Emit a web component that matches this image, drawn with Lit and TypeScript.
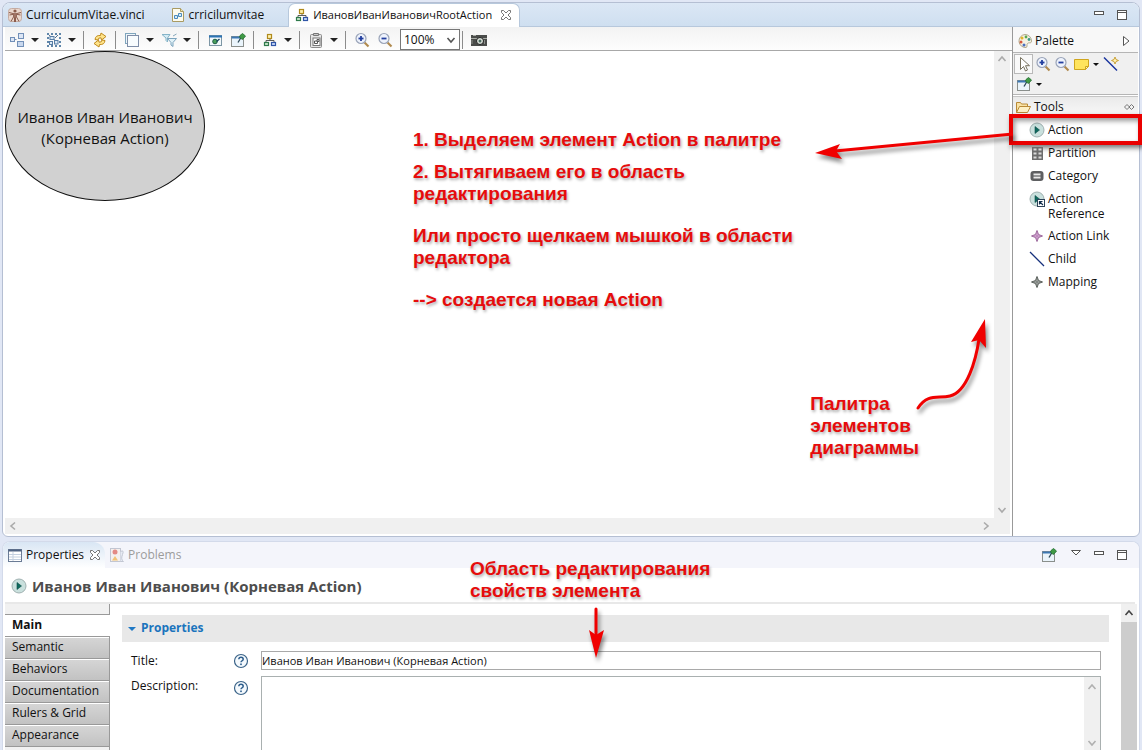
import { LitElement, html, css, svg, nothing, TemplateResult } from "lit";
import { customElement, property, state } from "lit/decorators.js";
import { classMap } from "lit/directives/class-map.js";

const playDisc = svg`
  <circle cx="8" cy="8" r="7" fill="#c9e0dd" stroke="#9fb0b0"/>
  <path d="M6 4.500v7L10.500 8z" fill="#0f6a5f" stroke="#0b4b47" stroke-width=".6"/>`;

const pinnedWindow = svg`
  <rect x="1.500" y="4.500" width="12" height="10" fill="#eaf4fb" stroke="#8a8f8c"/>
  <path d="M1.500 5.500h9" stroke="#3c78b4" stroke-width="2"/>
  <path d="M11 5.500 8 10.500" stroke="#2d4858" stroke-width="1.300"/>
  <path d="M10 3.500 12.500 1.500 15.500 4 13.500 6.500 12 7.500 9.500 5z" fill="#3f9a45" stroke="#1f6d2d" stroke-width=".8"/>`;

const magnifier = (plus: boolean) => svg`
  <path d="m10.500 10.500 4 4" stroke="#b08a4e" stroke-width="2.200"/>
  <circle cx="7" cy="6.500" r="5" fill="#eef3fd" stroke="#9aa4b8" stroke-width="1.200"/>
  <path d="M4.500 6.500h5" stroke="#233f9f" stroke-width="1.800"/>
  ${plus ? svg`<path d="M7 4v5" stroke="#233f9f" stroke-width="1.800"/>` : nothing}`;

const tree = svg`
  <path d="M8 6v3M4 11V8.500h8V11" fill="none" stroke="#5b5b5b"/>
  <rect x="5.500" y="2.500" width="4" height="4" fill="#fff2b0" stroke="#b08a1c" stroke-width="1.200"/>
  <rect x="2.500" y="10.500" width="4" height="3" fill="#cfe8cf" stroke="#2f7a4c" stroke-width="1.200"/>
  <rect x="9.500" y="10.500" width="4" height="3" fill="#cddcf8" stroke="#2f55a8" stroke-width="1.200"/>`;

const sparkle = (fill: string, stroke: string) => svg`
  <path d="M8 2.500 9.500 6.500 13.500 8 9.500 9.500 8 13.500 6.500 9.500 2.500 8 6.500 6.500z" fill="${fill}" stroke="${stroke}"/>
  <path d="M8 5v6M5 8h6" stroke="${stroke}" stroke-width=".6"/>`;

const ICONS: Record<string, unknown> = {
  vinci: svg`
    <rect x="1.500" y="1.500" width="13" height="13" rx="3" fill="#ead7cd" stroke="#c4aba1"/>
    <circle cx="8" cy="4" r="1.600" fill="#8a5b4c"/>
    <path d="M2 5.500 8 7l6-1.500M2.500 8 8 7l5.500 1M6.500 7v3L4 14.500M9.500 7v3l2.500 4.500M7.500 10v5M8.500 10v5" fill="none" stroke="#8a5b4c"/>
    <path d="M6.500 6h3v4.500h-3z" fill="#a07566"/>`,
  diagramFile: svg`
    <path d="M2.500 1.500h8l3 3v10h-11z" fill="#fdfbee" stroke="#a99a62"/>
    <path d="M10.500 1.500v3h3" fill="#efe2ad" stroke="#a99a62"/>
    <path d="M4.500 8.500h3v3h-3zM8.500 6.500h3v3h-3z" fill="#d8ecf8" stroke="#4b8bbd"/>`,
  tree,
  arrange: svg`
    <rect x="1.500" y="5.500" width="4" height="4" fill="#dce6f5" stroke="#7290b8"/>
    <rect x="9.500" y="1.500" width="5" height="5" fill="#dce6f5" stroke="#7290b8"/>
    <rect x="8.500" y="9.500" width="6" height="5" fill="#c9d8ee" stroke="#7290b8"/>
    <path d="M6 7.500h1.500" stroke="#7290b8"/>`,
  selectAll: svg`
    <path d="M1 1h2v2H1zM5 1h2v2H5zM9 1h2v2H9zM13 1h2v2h-2zM1 13h2v2H1zM5 13h2v2H5zM9 13h2v2H9zM13 13h2v2h-2zM1 5h2v2H1zM1 9h2v2H1zM13 5h2v2h-2zM13 9h2v2h-2z" fill="#5f86aa"/>
    <path d="m3 3 9 8M12 3l-3 3" stroke="#4f6f8f"/>
    <rect x="4" y="4.500" width="4" height="3" fill="#d9e8f6" stroke="#587ea6"/>
    <rect x="8.500" y="8.500" width="3.500" height="3.500" fill="#d9e8f6" stroke="#587ea6"/>
    <rect x="3.500" y="9.500" width="3" height="3" fill="#d9e8f6" stroke="#587ea6"/>`,
  refresh: svg`
    <path d="M3 7.500Q3.500 3 8.500 3.500L9 1l5 3.500L9.500 8 9 5.800Q6 5.500 6 8z" fill="#ffe48a" stroke="#c08a1d"/>
    <path d="M13 8.500Q12.500 13 7.500 12.500L7 15l-5-3.500L6.500 8 7 10.200Q10 10.500 10 8z" fill="#ffe48a" stroke="#c08a1d"/>`,
  layers: svg`
    <rect x="1.500" y="1.500" width="10" height="10" fill="#eef6fa" stroke="#7fa5bd"/>
    <rect x="3.500" y="3.500" width="11" height="11" fill="#f8fcfe" stroke="#7f8ea8"/>`,
  filter: svg`
    <path d="M1 2.500h8L6.500 6v4L5 8.500V6z" fill="#d5ecf5" stroke="#86b4c8"/>
    <path d="M6.500 6.500h9L12 10.500v4l-2-1.500v-2.500z" fill="#e1f2f8" stroke="#7ba3bd"/>
    <path d="m12 4 3.500-2" stroke="#86a7ba"/>`,
  windowGo: svg`
    <rect x="2.500" y="3.500" width="12" height="10" fill="#f2f8fb" stroke="#7d96a5"/>
    <path d="M2 4.500h13" stroke="#2b73b5" stroke-width="2"/>
    <circle cx="8" cy="9.500" r="2.300" fill="#4aa05a" stroke="#1e5c46"/>
    <path d="m9.500 9.500 3-2.500" stroke="#17435c" stroke-width="1.300"/>`,
  pinnedWindow,
  paste: svg`
    <rect x="2.500" y="2.500" width="11" height="13" rx="1" fill="#e5e5e5" stroke="#8b8b8b"/>
    <path d="M5.500 3.500v-2h5v2z" fill="#c9c9c9" stroke="#777"/>
    <rect x="5" y="6" width="7" height="7.500" fill="#fff" stroke="#777"/>
    <path d="M6.500 9h3v2.500h-3zM9 7.500h2v2H9z" fill="none" stroke="#555"/>`,
  zoomIn: magnifier(true),
  zoomOut: magnifier(false),
  camera: svg`
    <rect x="0" y="3" width="16" height="11" fill="#4a4c4a"/>
    <path d="M2 3.500h3M0 6.500h16" stroke="#a9aca6"/>
    <circle cx="9" cy="9" r="3.500" fill="#dfe5de" stroke="#1f1f1f"/>
    <circle cx="9" cy="9" r="1.500" fill="#4c6b60"/>
    <path d="M1 8v4M13.500 8v4" stroke="#8a8d88"/>`,
  palette: svg`
    <path d="M8 1.500a6.500 6.500 0 1 0 1 13c2-.5.2-2.500 1.500-4s4 .5 4-2.500A6.500 6.500 0 0 0 8 1.500z" fill="#f6f1e2" stroke="#b1a88a"/>
    <circle cx="5" cy="5" r="1.500" fill="#e2b52a"/><circle cx="9" cy="4" r="1.400" fill="#5aa94e"/>
    <circle cx="12" cy="6.500" r="1.400" fill="#3c9a86"/><circle cx="4" cy="9" r="1.500" fill="#d55539"/>
    <circle cx="7" cy="12" r="1.500" fill="#4a6ec0"/>`,
  cursor: svg`<path d="M4.500 1.500v12l3-3 2 4.500 2-1-2-4.300h4z" fill="#fff" stroke="#77715e"/>`,
  note: svg`
    <path d="M1.500 3.500h14v7l-3 3h-11z" fill="#ffe45c" stroke="#cfa51d"/>
    <path d="M12.500 13.500v-3h3z" fill="#fff4b0" stroke="#cfa51d"/>`,
  lineTool: svg`
    <path d="m1 1.500 13 13" stroke="#16329c" stroke-width="1.400"/>
    <path d="m12 1 1 2.500 2.500 1L13 5.500l-1 2.500-1-2.500-2.500-1 2.500-1z" fill="#fff3b5" stroke="#c59b2c" stroke-width=".9"/>`,
  folder: svg`
    <path d="M1.500 13.500v-10h4l1 1.500h6v3" fill="#f9e3a6" stroke="#b98a36"/>
    <path d="m1.500 13.500 3-6h11l-3 6z" fill="#fdf0c4" stroke="#b98a36"/>`,
  play: playDisc,
  partition: svg`
    <rect x="3" y="2" width="11" height="13" fill="#6d6d6d"/>
    <path d="M4.500 3.500h3v2h-3zM9.500 3.500h3v2h-3zM4.500 7.500h3v2h-3zM9.500 7.500h3v2h-3zM4.500 11.500h3v2h-3zM9.500 11.500h3v2h-3z" fill="#d9d9d9"/>`,
  category: svg`
    <rect x="1.500" y="3" width="13" height="10" rx="3" fill="#5e5f61"/>
    <rect x="4.500" y="5.500" width="7" height="5" fill="#e9e9e9"/>
    <path d="M4 8h8" stroke="#5e5f61" stroke-width="1.200"/>`,
  reference: svg`
    ${playDisc}
    <rect x="8.500" y="8.500" width="7" height="7" fill="#fff" stroke="#2d4258"/>
    <path d="m14 14-3.500-3.500M10.500 13.500v-3h3" fill="none" stroke="#16324f" stroke-width="1.200"/>`,
  link: sparkle("#e2b5e0", "#9a659a"),
  child: svg`<path d="m1 1 14 14" stroke="#16307c" stroke-width="1.300"/>`,
  mapping: sparkle("#b5b8b5", "#555b57"),
  table: svg`
    <rect x="1.500" y="2.500" width="13" height="12" fill="#fff" stroke="#6a7b95"/>
    <path d="M1.500 3.500h13" stroke="#4f6382" stroke-width="2"/>
    <path d="M6 5v9M2 7.500h12M2 10h12M2 12.500h12" stroke="#c5d1e0"/>`,
  problems: svg`
    <rect x="1.500" y="1.500" width="10" height="13" fill="#f4f0ee" stroke="#c2c6d2"/>
    <circle cx="6" cy="5" r="2.500" fill="#e38a84"/>
    <path d="m6 9 3 4.500H3z" fill="#f2c376"/>
    <path d="M11.500 4.500q4-2 2 3t1 7h-3" fill="#e7ebf4" stroke="#c2c6d2"/>`,
  help: svg`
    <circle cx="8" cy="8" r="6.500" fill="#f4f9fd" stroke="#3a6388" stroke-width="1.200"/>
    <path d="M5.800 6.300Q6 4.300 8 4.300q2.200 0 2.200 1.900 0 1-1.200 1.600-1 .5-1 1.500" fill="none" stroke="#2c5d8c" stroke-width="1.500"/>
    <rect x="7.200" y="10.500" width="1.600" height="1.600" fill="#2c5d8c"/>`,
  close: svg`<path d="M3.500 3.500h2L8 6l2.500-2.500h2v2L10 8l2.500 2.500v2h-2L8 10l-2.500 2.500h-2v-2L6 8 3.500 5.500z" fill="#fff" stroke="#666" stroke-width=".9"/>`,
  minimize: svg`<rect x="3.500" y="4.500" width="9" height="3" fill="#fff" stroke="#555"/>`,
  maximize: svg`<rect x="3.500" y="3.500" width="9" height="9" fill="#fff" stroke="#555"/><path d="M3.500 5.500h9" stroke="#555"/>`,
  menu: svg`<path d="M3.500 3.500h9L8 8z" fill="#fff" stroke="#555"/>`,
  expand: svg`<path d="M5.500 3.500v9L11 8z" fill="#fff" stroke="#555"/>`,
  pushpin: svg`<path d="m6 5.500-2.500 2.500L6 10.500 8.500 8zM10.500 5.500 8 8l2.500 2.500L13 8z" fill="none" stroke="#777"/>`,
  caret: svg`<path d="M4 6h8L8 10z" fill="#222"/>`,
  smallCaret: svg`<path d="M5 7h6L8 10z" fill="#111"/>`,
  twistie: svg`<path d="M4 7h8L8 11z" fill="#1f78c4"/>`,
  up: svg`<path d="m4.500 10 3.500-4 3.500 4" fill="none" stroke="currentColor" stroke-width="1.600"/>`,
  down: svg`<path d="m4.500 6 3.500 4 3.500-4" fill="none" stroke="currentColor" stroke-width="1.600"/>`,
  left: svg`<path d="M10 4.500 6 8l4 3.500" fill="none" stroke="currentColor" stroke-width="1.600"/>`,
  right: svg`<path d="m6 4.500 4 3.500-4 3.500" fill="none" stroke="currentColor" stroke-width="1.600"/>`,
};

@customElement("ui-icon")
export class UiIcon extends LitElement {
  @property() name = "";

  static styles = css`
    :host { display: block; flex: none; width: 16px; height: 16px; }
    .glyph { display: block; width: 16px; height: 16px; }
  `;

  render() {
    return html`<svg class="glyph" viewBox="0 0 16 16" aria-hidden="true">${ICONS[this.name]}</svg>`;
  }
}

const base = css`
  * { box-sizing: border-box; }
  button, input, textarea, select { font: inherit; color: inherit; }
  button { border: 0; padding: 0; background: none; display: flex; align-items: center; text-align: left; white-space: nowrap; }
`;

interface Tool { icon: string; label: string; menu?: boolean; }

const TOOL_GROUPS: Tool[][] = [
  [{ icon: "arrange", label: "Arrange", menu: true }, { icon: "selectAll", label: "Select", menu: true }],
  [{ icon: "refresh", label: "Refresh" }],
  [{ icon: "layers", label: "Layers", menu: true }, { icon: "filter", label: "Filters", menu: true }],
  [{ icon: "windowGo", label: "Show" }, { icon: "pinnedWindow", label: "Pin" }],
  [{ icon: "tree", label: "Layout", menu: true }],
  [{ icon: "paste", label: "Paste", menu: true }],
];

@customElement("diagram-toolbar")
export class DiagramToolbar extends LitElement {
  static styles = [base, css`
    :host { display: flex; align-items: center; box-sizing: border-box; height: 24px; padding: 2px 0 0 4px; background: linear-gradient(#f3f3f3, #fdfdfd); border-bottom: 1px solid #a8a8a8; }
    .tool { width: 23px; height: 20px; }
    .tool.menu { width: 37px; gap: 2px; }
    .separator { width: 1px; height: 18px; margin-right: 8px; background: #8c8c8c; }
    .combo { display: flex; align-items: center; width: 60px; height: 21px; margin-right: 2px; background: #fff; border: 1px solid #777; }
    .zoom { flex: 1; min-width: 0; height: 19px; margin: 0; padding: 0 3px; border: 0; background: none; appearance: none; outline: none; }
    .arrow { color: #555; margin-left: -16px; pointer-events: none; }
  `];

  private tool(t: Tool) {
    return html`<button class=${classMap({ tool: true, menu: !!t.menu })} aria-label=${t.label}>
      <ui-icon name=${t.icon}></ui-icon>${t.menu ? html`<ui-icon name="caret"></ui-icon>` : nothing}
    </button>`;
  }

  render() {
    return html`
      ${TOOL_GROUPS.map((g) => html`${g.map((t) => this.tool(t))}<span class="separator"></span>`)}
      ${this.tool({ icon: "zoomIn", label: "Zoom in" })}${this.tool({ icon: "zoomOut", label: "Zoom out" })}
      <span class="combo">
        <select class="zoom" aria-label="Zoom"><option>100%</option></select>
        <ui-icon class="arrow" name="down"></ui-icon>
      </span>
      <span class="separator"></span>
      ${this.tool({ icon: "camera", label: "Snapshot" })}
    `;
  }
}

const ENTRIES: Tool[] = [
  { icon: "play", label: "Action" },
  { icon: "partition", label: "Partition" },
  { icon: "category", label: "Category" },
  { icon: "reference", label: "Action Reference" },
  { icon: "link", label: "Action Link" },
  { icon: "child", label: "Child" },
  { icon: "mapping", label: "Mapping" },
];

@customElement("tool-palette")
export class ToolPalette extends LitElement {
  static styles = [base, css`
    :host { display: block; box-sizing: border-box; width: 127px; border-left: 1px solid #999; padding-right: 1px; }
    .header { display: flex; align-items: center; gap: 2px; height: 26px; padding: 2px 4px 0; background: #f8f8f8; border-bottom: 1px solid #b5b5b5; }
    .name { flex: 1; }
    .tools { display: flex; flex-wrap: wrap; align-content: flex-start; height: 42px; padding: 1px 1px; background: #f0f0f0; border-bottom: 1px solid #b5b5b5; }
    .tool { width: 19px; height: 20px; justify-content: center; }
    .tool.pressed { background: #f9f9f9; border: 1px solid #b9b9b9; }
    .tool.menu { width: 30px; }
    .more { width: 12px; margin-left: -1px; }
    .drawer { display: flex; align-items: center; gap: 3px; width: 100%; height: 20px; margin-top: 1px; padding: 0 1px 0 2px; background: linear-gradient(#eaeaea, #f8f8f8); border-top: 1px solid #c5c5c5; }
    .entries { display: flex; flex-direction: column; margin: 2px 0 0; padding: 0; list-style: none; }
    .item { position: relative; }
    .entry { align-items: flex-start; gap: 3px; width: 100%; padding: 4px 16px 3px; line-height: 15px; white-space: normal; }
    .highlight { position: absolute; inset: -4px; border: 4px solid #ea0000; box-shadow: 2px 3px 5px #0008, inset 2px 3px 5px #0006; pointer-events: none; }
  `];

  private tool(icon: string, label: string, kind = "") {
    return html`<button class="tool ${kind}" aria-label=${label}>
      <ui-icon name=${icon}></ui-icon>${kind === "menu" ? html`<ui-icon class="more" name="smallCaret"></ui-icon>` : nothing}
    </button>`;
  }

  render() {
    return html`
      <div class="header"><ui-icon name="palette"></ui-icon><span class="name">Palette</span><ui-icon name="expand"></ui-icon></div>
      <div class="tools">
        ${this.tool("cursor", "Select", "pressed")}${this.tool("zoomIn", "Zoom in")}${this.tool("zoomOut", "Zoom out")}
        ${this.tool("note", "Note", "menu")}${this.tool("lineTool", "Attachment")}${this.tool("pinnedWindow", "Pin", "menu")}
      </div>
      <button class="drawer"><ui-icon name="folder"></ui-icon><span class="name">Tools</span><ui-icon name="pushpin"></ui-icon></button>
      <ul class="entries">
        ${ENTRIES.map((e, i) => html`<li class="item">
          <button class="entry"><ui-icon name=${e.icon}></ui-icon><span>${e.label}</span></button>
          ${i === 0 ? html`<span class="highlight"></span>` : nothing}
        </li>`)}
      </ul>
    `;
  }
}

@customElement("diagram-editor")
export class DiagramEditor extends LitElement {
  static styles = [base, css`
    :host { display: flex; flex-direction: column; min-height: 0; border: 1px solid #b5bfd3; border-radius: 8px 8px 6px 6px; background: #fff; }
    .tabs { display: flex; align-items: center; height: 24px; padding-right: 6px; background: linear-gradient(#dbe7f5, #cfdff0); border-bottom: 1px solid #b7c8dc; border-radius: 7px 7px 0 0; }
    .tab { gap: 3px; height: 24px; padding: 0 4px; }
    .tab.second { margin-left: 17px; }
    .tab.active { margin-left: 20px; padding: 0 5px; background: #fff; border: 1px solid #b7c8dc; border-bottom: 0; border-radius: 7px 7px 0 0; font-size: 11px; }
    .close { margin-left: 3px; }
    .spacer { flex: 1; }
    .window { width: 23px; justify-content: center; }
    .body { flex: 1; min-height: 0; display: flex; }
    .main { flex: 1; min-width: 0; display: flex; flex-direction: column; padding-left: 2px; }
    .view { flex: 1; min-height: 0; display: grid; grid-template: minmax(0, 1fr) 16px / minmax(0, 1fr) 16px; padding: 0 2px 2px 0; }
    .canvas { overflow: hidden; }
    .node { display: flex; align-items: center; justify-content: center; width: 200px; height: 150px; padding-top: 3px; border: 1px solid #111; border-radius: 50%; background: #d1d1d1; text-align: center; font-size: 15px; line-height: 21px; white-space: pre-line; }
    .scroll { display: flex; justify-content: space-between; align-items: center; background: #f0f0f0; color: #aaa; }
    .vertical { flex-direction: column; }
    .corner { background: #f0f0f0; }
  `];

  render() {
    return html`
      <div class="tabs" role="tablist">
        <button class="tab" role="tab"><ui-icon name="vinci"></ui-icon>CurriculumVitae.vinci</button>
        <button class="tab second" role="tab"><ui-icon name="diagramFile"></ui-icon>crricilumvitae</button>
        <button class="tab active" role="tab" aria-selected="true"><ui-icon name="tree"></ui-icon>ИвановИванИвановичRootAction<ui-icon class="close" name="close"></ui-icon></button>
        <span class="spacer"></span>
        <button class="window" aria-label="Minimize"><ui-icon name="minimize"></ui-icon></button>
        <button class="window" aria-label="Maximize"><ui-icon name="maximize"></ui-icon></button>
      </div>
      <div class="body">
        <div class="main">
          <diagram-toolbar></diagram-toolbar>
          <div class="view">
            <div class="canvas"><div class="node">${"Иванов Иван Иванович\n(Корневая Action)"}</div></div>
            <div class="scroll vertical"><ui-icon name="up"></ui-icon><ui-icon name="down"></ui-icon></div>
            <div class="scroll"><ui-icon name="left"></ui-icon><ui-icon name="right"></ui-icon></div>
            <div class="corner"></div>
          </div>
        </div>
        <tool-palette></tool-palette>
      </div>
    `;
  }
}

const SECTIONS = ["Main", "Semantic", "Behaviors", "Documentation", "Rulers & Grid", "Appearance"];

@customElement("properties-view")
export class PropertiesView extends LitElement {
  @state() private section = "Main";

  static styles = [base, css`
    :host { display: flex; flex-direction: column; min-height: 0; border: 1px solid #d3daea; border-bottom: 0; border-radius: 8px 8px 0 0; background: #fff; overflow: hidden; }
    .tabs { display: flex; align-items: center; height: 26px; padding-right: 6px; background: #f4f5fb; }
    .tab { gap: 3px; height: 26px; padding: 0 4px; }
    .tab.active { padding-right: 2px; background: linear-gradient(#d9e6f4, #fff); border-radius: 0 12px 0 0; }
    .tab.idle { color: #9c9c9c; }
    .spacer { flex: 1; }
    .window { width: 23px; justify-content: center; }
    .pin { margin-right: 4px; }
    .heading { display: flex; align-items: center; gap: 5px; height: 36px; margin: 0 4px 0 2px; padding: 2px 6px 0; border-bottom: 2px solid #e8e8e8; color: #4d4d4d; font-size: 15px; font-weight: 700; }
    .body { flex: 1; min-height: 0; display: flex; padding: 0 2px 0 2px; }
    .sections { width: 105px; }
    .blank { height: 11px; background: #f1f1f1; border: solid #999; border-width: 0 1px 1px 0; }
    .section { width: 100%; height: 22px; padding: 0 7px 2px; background: linear-gradient(#d6d6d6, #c2c2c2); border: solid #999; border-width: 0 1px 1px 0; box-shadow: inset 0 1px #fff; }
    .section.active { background: #fff; border-right: 0; font-weight: 700; }
    .form { flex: 1; min-width: 0; padding: 11px 12px 0; }
    .title { display: flex; align-items: center; gap: 1px; height: 27px; margin: 0 0 9px; padding: 0 2px 2px; background: #e8e8e8; color: #1a74bd; font-size: 12px; }
    .row { display: flex; align-items: flex-start; margin: 0 8px 5px 9px; }
    .label { width: 102px; line-height: 19px; }
    .help { width: 28px; height: 20px; }
    .help.low { height: 24px; }
    .text { flex: 1; min-width: 0; height: 19px; padding: 0; border: 1px solid #a9a9a9; background: #fff; outline: none; font-size: 11px; }
    .area { flex: 1; display: flex; height: 80px; border: 1px solid #a9b0b0; }
    .description { flex: 1; min-width: 0; padding: 0; border: 0; resize: none; outline: none; overflow: hidden; }
    .scroll { display: flex; flex-direction: column; justify-content: space-between; padding: 2px 0 4px; background: #f0f0f0; color: #b0b0b0; }
    .outer { width: 16px; background: #cdcdcd; }
    .cap { padding: 1px 0; background: #f0f0f0; color: #444; }
  `];

  render() {
    return html`
      <div class="tabs" role="tablist">
        <button class="tab active" role="tab" aria-selected="true"><ui-icon name="table"></ui-icon>Properties<ui-icon name="close"></ui-icon></button>
        <button class="tab idle" role="tab"><ui-icon name="problems"></ui-icon>Problems</button>
        <span class="spacer"></span>
        <button class="window pin" aria-label="Pin"><ui-icon name="pinnedWindow"></ui-icon></button>
        <button class="window" aria-label="Menu"><ui-icon name="menu"></ui-icon></button>
        <button class="window" aria-label="Minimize"><ui-icon name="minimize"></ui-icon></button>
        <button class="window" aria-label="Maximize"><ui-icon name="maximize"></ui-icon></button>
      </div>
      <div class="heading"><ui-icon name="play"></ui-icon>Иванов Иван Иванович (Корневая Action)</div>
      <div class="body">
        <nav class="sections">
          <div class="blank"></div>
          ${SECTIONS.map((s) => html`<button class=${classMap({ section: true, active: s === this.section })} @click=${() => (this.section = s)}>${s}</button>`)}
          <div class="blank"></div>
        </nav>
        <div class="form">
          <h2 class="title"><ui-icon name="twistie"></ui-icon>Properties</h2>
          <div class="row">
            <label class="label" for="title">Title:</label>
            <button class="help" aria-label="Title help"><ui-icon name="help"></ui-icon></button>
            <input class="text" id="title" .value=${"Иванов Иван Иванович (Корневая Action)"}>
          </div>
          <div class="row">
            <label class="label" for="description">Description:</label>
            <button class="help low" aria-label="Description help"><ui-icon name="help"></ui-icon></button>
            <div class="area">
              <textarea class="description" id="description"></textarea>
              <div class="scroll"><ui-icon name="up"></ui-icon><ui-icon name="down"></ui-icon></div>
            </div>
          </div>
        </div>
        <div class="outer"><div class="cap"><ui-icon name="up"></ui-icon></div></div>
      </div>
    `;
  }
}

@customElement("app-root")
export class AppRoot extends LitElement {
  static styles = css`
    :host { display: grid; grid-template-rows: minmax(0, 1fr) 209px; gap: 4px; position: relative; box-sizing: border-box; height: 100vh; padding: 2px 2px 0; overflow: hidden; background: #e1e7f5; color: #111; font: 12px/16px "Open Sans", "Noto Sans", sans-serif; }
    .note { position: absolute; margin: 0; color: #e60c0c; font: 700 19px/22px "Liberation Sans", sans-serif; text-shadow: 1px 2px 3px #0005; pointer-events: none; }
    .lines { white-space: pre-line; }
    .steps { left: 413px; top: 129px; }
    .step { margin: 0 0 20px; }
    .step.first { margin-bottom: 10px; }
    .about-palette { right: 223px; top: 393px; }
    .about-properties { left: 470px; bottom: 148px; }
    .arrow { position: absolute; overflow: visible; filter: drop-shadow(2px 4px 2px #0007); pointer-events: none; }
    .to-canvas { right: 129px; top: 130px; }
    .to-palette { right: 151px; top: 316px; }
    .to-properties { left: 586px; bottom: 92px; }
  `;

  render(): TemplateResult {
    return html`
      <diagram-editor></diagram-editor>
      <properties-view></properties-view>
      <div class="note steps">
        <p class="step first">1. Выделяем элемент Action в палитре</p>
        <p class="step lines">${"2. Вытягиваем его в область\nредактирования"}</p>
        <p class="step lines">${"Или просто щелкаем мышкой в области\nредактора"}</p>
        <p class="step">--&gt; создается новая Action</p>
      </div>
      <p class="note lines about-palette">${"Палитра\nэлементов\nдиаграммы"}</p>
      <p class="note lines about-properties">${"Область редактирования\nсвойств элемента"}</p>
      <svg class="arrow to-canvas" width="198" height="32" viewBox="0 0 198 32" aria-hidden="true">
        <path d="M198 4 20 21" stroke="#f00000" stroke-width="3"/><path d="M0 23 25 14 21 21 27 29z" fill="#f00000"/>
      </svg>
      <svg class="arrow to-palette" width="76" height="96" viewBox="0 0 76 96" aria-hidden="true">
        <path d="M3 92C13 77 23 83 35 80C52 76 61 44 64 23" fill="none" stroke="#f00000" stroke-width="3" stroke-linecap="round"/>
        <path d="M70 3 71 32 64 24 56 26z" fill="#f00000"/>
      </svg>
      <svg class="arrow to-properties" width="20" height="52" viewBox="0 0 20 52" aria-hidden="true">
        <path d="M10 3v28" stroke="#f00000" stroke-width="3" stroke-linecap="round"/><path d="M10 52 3 24 10 29 18 24z" fill="#f00000"/>
      </svg>
    `;
  }
}
